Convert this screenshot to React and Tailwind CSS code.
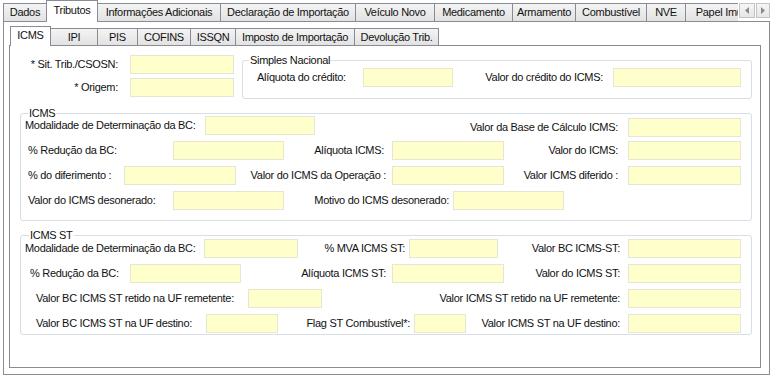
import React from 'react';

const Inp = ({ w, className = '' }) => (
  <div className={`${w} h-[19px] shrink-0 bg-[#ffffcc] border border-[#e6e6d2] ${className}`} />
);

const Lbl = ({ w, right, className = '', children }) => (
  <span className={`${w} shrink-0 whitespace-nowrap ${right ? 'text-right' : 'text-left'} ${className}`}>
    {children}
  </span>
);

const Group = ({ title, titleX, className = '', children }) => (
  <div className={`relative border border-[#d5dfe5] rounded-[3px] ${className}`}>
    <span className={`absolute -top-[7px] ${titleX} bg-white px-px leading-[13px]`}>{title}</span>
    {children}
  </div>
);

const Row = ({ children }) => <div className="flex items-center h-[19px]">{children}</div>;

const OuterTab = ({ w, active, first, children }) =>
  active ? (
    <div className={`${w} ${first ? '' : '-ml-px'} relative z-10 h-[22px] pb-[2px] shrink-0 flex items-center justify-center bg-white border-x border-t border-[#898c95] whitespace-nowrap`}>
      {children}
    </div>
  ) : (
    <div className={`${w} ${first ? '' : '-ml-px'} mt-[3px] h-[18px] shrink-0 flex items-center justify-center bg-linear-to-b from-[#f4f4f4] to-[#e2e2e2] border-x border-t border-[#898c95] whitespace-nowrap`}>
      {children}
    </div>
  );

const InnerTab = ({ w, active, first, children }) =>
  active ? (
    <div className={`${w} ${first ? '' : '-ml-px'} relative z-10 mt-[4px] h-[20px] pb-[2px] shrink-0 flex items-center justify-center bg-white border-x border-t border-[#898c95] whitespace-nowrap`}>
      {children}
    </div>
  ) : (
    <div className={`${w} ${first ? '' : '-ml-px'} mt-[6px] h-[17px] shrink-0 flex items-center justify-center bg-linear-to-b from-[#f4f4f4] to-[#e2e2e2] border-x border-t border-[#898c95] whitespace-nowrap`}>
      {children}
    </div>
  );

const ScrollBtn = ({ w, dir }) => (
  <div className={`${w} h-[15px] flex items-center justify-center border border-[#c4c4c4] bg-linear-to-b from-[#f6f6f6] to-[#e6e6e6]`}>
    <svg width="4" height="7" viewBox="0 0 4 7">
      {dir === 'left' ? <path d="M4 0 L0 3.5 L4 7 Z" fill="#8a8a8a" /> : <path d="M0 0 L4 3.5 L0 7 Z" fill="#8a8a8a" />}
    </svg>
  </div>
);

export default function App() {
  return (
    <div className="w-[773px] h-[377px] bg-white overflow-hidden font-['Liberation_Sans',Arial,sans-serif] text-[11px] tracking-[-0.3px] leading-none text-[#111]">
      {/* abas principais */}
      <div className="flex h-[22px] pl-[3px]">
        <div className="flex items-start w-[735px] overflow-hidden">
          <OuterTab w="w-[44px]" first>Dados</OuterTab>
          <OuterTab w="w-[52px]" active>Tributos</OuterTab>
          <OuterTab w="w-[124px]">Informações Adicionais</OuterTab>
          <OuterTab w="w-[136px]">Declaração de Importação</OuterTab>
          <OuterTab w="w-[80px]">Veículo Novo</OuterTab>
          <OuterTab w="w-[79px]">Medicamento</OuterTab>
          <OuterTab w="w-[64px]">Armamento</OuterTab>
          <OuterTab w="w-[72px]">Combustível</OuterTab>
          <OuterTab w="w-[40px]">NVE</OuterTab>
          <OuterTab w="w-[80px]">Papel Imune</OuterTab>
        </div>
        <div className="flex gap-px mt-[3px] ml-px">
          <ScrollBtn w="w-[16px]" dir="left" />
          <ScrollBtn w="w-[14px]" dir="right" />
        </div>
      </div>

      <div className="-mt-px ml-[3px] w-[767px] h-[354px] border border-[#898c95] pl-[5px]">
        {/* abas de tributos */}
        <div className="flex items-start h-[24px] pl-px">
          <InnerTab w="w-[41px]" active first>ICMS</InnerTab>
          <InnerTab w="w-[48px]">IPI</InnerTab>
          <InnerTab w="w-[41px]">PIS</InnerTab>
          <InnerTab w="w-[54px]">COFINS</InnerTab>
          <InnerTab w="w-[46px]">ISSQN</InnerTab>
          <InnerTab w="w-[120px]">Imposto de Importação</InnerTab>
          <InnerTab w="w-[85px]">Devolução Trib.</InnerTab>
        </div>

        <div className="-mt-px w-[752px] h-[323px] border border-[#898c95]">
          <div className="flex items-start">
            <div className="w-[232px] mt-[9px] flex flex-col gap-[4px]">
              <Row>
                <Lbl w="w-[108px]" right>* Sit. Trib./CSOSN:</Lbl>
                <Inp w="w-[104px]" className="ml-[12px]" />
              </Row>
              <Row>
                <Lbl w="w-[108px]" right>* Origem:</Lbl>
                <Inp w="w-[104px]" className="ml-[12px]" />
              </Row>
            </div>
            <Group title="Simples Nacional" titleX="left-[6px]" className="mt-[14px] w-[510px] h-[39px] pt-[7px]">
              <Row>
                <Lbl w="w-[106px]" className="ml-[14px]">Alíquota do crédito:</Lbl>
                <Inp w="w-[90px]" />
                <Lbl w="w-[150px]" right>Valor do crédito do ICMS:</Lbl>
                <Inp w="w-[128px]" className="ml-[10px]" />
              </Row>
            </Group>
          </div>

          <Group title="ICMS" titleX="left-[7px]" className="mt-[14px] ml-[10px] w-[732px] h-[108px] pt-[2px] flex flex-col gap-[6px]">
            <Row>
              <Lbl w="w-[180px]" className="ml-[4px]">Modalidade de Determinação da BC:</Lbl>
              <Inp w="w-[110px]" />
              <Lbl w="w-[303px]" right className="mt-[3px]">Valor da Base de Cálculo ICMS:</Lbl>
              <Inp w="w-[113px]" className="ml-[10px] mt-[3px]" />
            </Row>
            <Row>
              <Lbl w="w-[145px]" className="ml-[7px]">% Redução da BC:</Lbl>
              <Inp w="w-[111px]" />
              <Lbl w="w-[100px]" right>Alíquota ICMS:</Lbl>
              <Inp w="w-[112px]" className="ml-[8px]" />
              <Lbl w="w-[114px]" right>Valor do ICMS:</Lbl>
              <Inp w="w-[113px]" className="ml-[10px]" />
            </Row>
            <Row>
              <Lbl w="w-[96px]" className="ml-[7px]">% do diferimento :</Lbl>
              <Inp w="w-[112px]" />
              <Lbl w="w-[150px]" right>Valor do ICMS da Operação :</Lbl>
              <Inp w="w-[112px]" className="ml-[6px]" />
              <Lbl w="w-[114px]" right>Valor ICMS diferido :</Lbl>
              <Inp w="w-[113px]" className="ml-[10px]" />
            </Row>
            <Row>
              <Lbl w="w-[145px]" className="ml-[7px]">Valor do ICMS desonerado:</Lbl>
              <Inp w="w-[111px]" />
              <Lbl w="w-[165px]" right>Motivo do ICMS desonerado:</Lbl>
              <Inp w="w-[111px]" className="ml-[4px]" />
            </Row>
          </Group>

          <Group title="ICMS ST" titleX="left-[8px]" className="mt-[14px] ml-[10px] w-[732px] h-[100px] pt-[3px] flex flex-col gap-[6px]">
            <Row>
              <Lbl w="w-[179px]" className="ml-[4px]">Modalidade de Determinação da BC:</Lbl>
              <Inp w="w-[94px]" />
              <Lbl w="w-[107px]" right>% MVA ICMS ST:</Lbl>
              <Inp w="w-[89px]" className="ml-[4px]" />
              <Lbl w="w-[122px]" right>Valor BC ICMS-ST:</Lbl>
              <Inp w="w-[113px]" className="ml-[8px]" />
            </Row>
            <Row>
              <Lbl w="w-[100px]" className="ml-[9px]">% Redução da BC:</Lbl>
              <Inp w="w-[111px]" />
              <Lbl w="w-[145px]" right>Alíquota ICMS ST:</Lbl>
              <Inp w="w-[112px]" className="ml-[6px]" />
              <Lbl w="w-[116px]" right>Valor do ICMS ST:</Lbl>
              <Inp w="w-[113px]" className="ml-[8px]" />
            </Row>
            <Row>
              <Lbl w="w-[212px]" className="ml-[15px]">Valor BC ICMS ST retido na UF remetente:</Lbl>
              <Inp w="w-[74px]" />
              <Lbl w="w-[298px]" right>Valor ICMS ST retido na UF remetente:</Lbl>
              <Inp w="w-[113px]" className="ml-[8px]" />
            </Row>
            <Row>
              <Lbl w="w-[170px]" className="ml-[15px]">Valor BC ICMS ST na UF destino:</Lbl>
              <Inp w="w-[72px]" />
              <Lbl w="w-[132px]" right>Flag ST Combustível*:</Lbl>
              <Inp w="w-[52px]" className="ml-[4px]" />
              <Lbl w="w-[154px]" right>Valor ICMS ST na UF destino:</Lbl>
              <Inp w="w-[113px]" className="ml-[8px]" />
            </Row>
          </Group>
        </div>
      </div>
    </div>
  );
}
